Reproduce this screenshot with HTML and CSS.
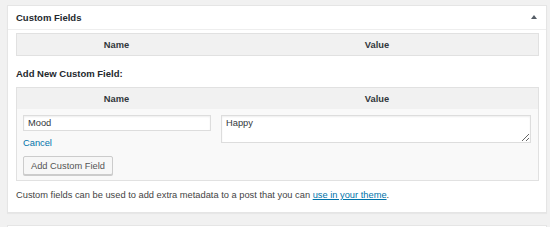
FILE: index.html
```html
<!DOCTYPE html>
<html lang="en">
<head>
    <meta charset="UTF-8">
    <title>Custom Fields</title>
    <link rel="stylesheet" href="styles.css">
</head>
<body>
    <div class="postbox">
        <div class="hndle">
            <span>Custom Fields</span>
            <span class="toggle"></span>
        </div>
        <div class="inside">
            <div class="meta-table">
                <div class="meta-head">
                    <div class="col-name">Name</div>
                    <div class="col-value">Value</div>
                </div>
            </div>

            <p class="add-title">Add New Custom Field:</p>

            <div class="meta-table">
                <div class="meta-head">
                    <div class="col-name">Name</div>
                    <div class="col-value">Value</div>
                </div>
                <div class="meta-body">
                    <div class="col-name">
                        <input type="text" class="key-input" value="Mood">
                        <a href="#" class="cancel">Cancel</a>
                        <button class="button">Add Custom Field</button>
                    </div>
                    <div class="col-value">
                        <textarea class="value-input">Happy</textarea>
                    </div>
                </div>
            </div>

            <p class="note">Custom fields can be used to add extra metadata to a post that you can <a href="#">use in your theme</a>.</p>
        </div>
    </div>
    <div class="postbox next"></div>
</body>
</html>
```

FILE: styles.css
```css
body {
    margin: 0;
    background-color: #f1f1f1;
    font-family: "Liberation Sans", Arial, sans-serif;
    font-size: 9.3px;
    color: #444;
}
.postbox {
    margin: 5px 3px 0 7px;
    background-color: #fff;
    border: 1px solid #e5e5e5;
    box-shadow: 0 1px 1px rgba(0, 0, 0, 0.04);
}
.postbox.next {
    margin-top: 12px;
    height: 1px;
}
.hndle {
    height: 23px;
    display: flex;
    align-items: center;
    justify-content: space-between;
    padding: 0 9px 0 8px;
    border-bottom: 1px solid #eee;
    font-size: 9.5px;
    font-weight: bold;
    color: #23282d;
}
.toggle {
    width: 0;
    height: 0;
    border-left: 3px solid transparent;
    border-right: 3px solid transparent;
    border-bottom: 4px solid #555d66;
    margin-top: -1px;
}
.inside {
    padding: 3px 7px 10px 8px;
}
.meta-table {
    border: 1px solid #e1e1e1;
    background-color: #f9f9f9;
}
.meta-head {
    display: grid;
    grid-template-columns: 199px 1fr;
    height: 21px;
    align-items: center;
    background-color: #f1f1f1;
    font-weight: bold;
    color: #32373c;
    text-align: center;
}
.meta-body {
    display: grid;
    grid-template-columns: 199px 1fr;
    padding: 6px 0 5px 0;
}
.meta-body .col-name {
    display: flex;
    flex-direction: column;
    align-items: flex-start;
    padding: 0 5px 0 6px;
}
.meta-body .col-value {
    padding: 0 7px 0 5px;
}
.add-title {
    margin: 11px 0 6px 0;
    line-height: 14px;
    font-size: 9.5px;
    font-weight: bold;
    color: #23282d;
}
.key-input,
.value-input {
    box-sizing: border-box;
    width: 100%;
    margin: 0;
    border: 1px solid #ddd;
    box-shadow: inset 0 1px 2px rgba(0, 0, 0, 0.07);
    background-color: #fff;
    font-family: "Liberation Sans", Arial, sans-serif;
    font-size: 9.3px;
    color: #32373c;
}
.key-input {
    height: 16px;
    padding: 0 4px;
}
.value-input {
    display: block;
    height: 28px;
    padding: 2px 4px;
    resize: vertical;
}
.cancel {
    margin: 6px 0 0 0;
    line-height: 12px;
    color: #0073aa;
    text-decoration: none;
}
.button {
    margin-top: 7px;
    height: 19px;
    padding: 0 7px;
    font-family: "Liberation Sans", Arial, sans-serif;
    font-size: 9.3px;
    color: #555;
    background-color: #f7f7f7;
    border: 1px solid #ccc;
    border-radius: 2px;
    box-shadow: 0 1px 0 #ccc;
}
.note {
    margin: 7px 0 0 0;
    line-height: 14px;
    color: #444;
}
.note a {
    color: #0073aa;
}
```
